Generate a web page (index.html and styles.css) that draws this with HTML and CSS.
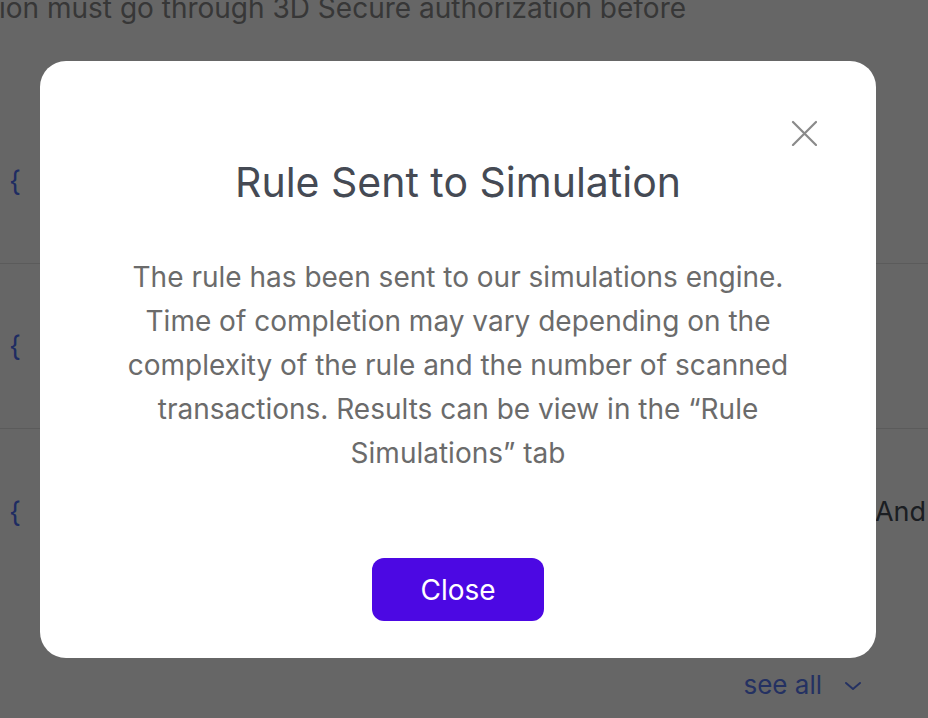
FILE: index.html
```html
<!DOCTYPE html>
<html lang="en">
<head>
<meta charset="utf-8">
<title>Rule Sent to Simulation</title>
<link rel="stylesheet" href="styles.css">
</head>
<body>
<div class="page">
  <p class="intro">ion must go through 3D Secure authorization before</p>
  <div class="rows">
    <div class="row">
      <span class="brace">{</span>
      <div class="field"></div>
    </div>
    <div class="row">
      <span class="brace">{</span>
      <div class="field"></div>
    </div>
    <div class="row row-last">
      <span class="brace">{</span>
      <span class="row-end">And</span>
    </div>
  </div>
  <div class="footer">
    <span class="see-all">see all</span>
    <svg class="chev" width="18" height="12" viewBox="0 0 18 12"><path d="M2 3l7 6 7-6" fill="none" stroke="currentColor" stroke-width="2" stroke-linecap="round" stroke-linejoin="round"/></svg>
  </div>
</div>

<div class="overlay">
  <div class="modal" role="dialog" aria-labelledby="modal-title">
    <button class="close-x" aria-label="Close">
      <svg width="26" height="26" viewBox="0 0 26 26"><path d="M2 2L25 25M25 2L2 25" stroke="currentColor" stroke-width="2.2" stroke-linecap="round"/></svg>
    </button>
    <h2 id="modal-title" class="title">Rule Sent to Simulation</h2>
    <p class="message">The rule has been sent to our simulations engine. Time of completion may vary depending on the complexity of the rule and the number of scanned transactions. Results can be view in the “Rule Simulations” tab</p>
    <button class="btn-close">Close</button>
  </div>
</div>
</body>
</html>
```

FILE: styles.css
```css
* { box-sizing: border-box; }

html, body {
  margin: 0;
  padding: 0;
  width: 928px;
  height: 718px;
  overflow: hidden;
  background: #ffffff;
  font-family: Inter, "Noto Sans", sans-serif;
}

.page {
  display: flex;
  flex-direction: column;
  height: 718px;
}

.intro {
  margin: -10px 0 0 -1px;
  font-size: 28px;
  line-height: 36px;
  color: #8a8a8a;
  white-space: nowrap;
}

.rows {
  margin-top: 73px;
  display: flex;
  flex-direction: column;
}

.row {
  height: 165px;
  display: flex;
  align-items: center;
  gap: 20px;
  padding-left: 9px;
  border-bottom: 1px solid #e3e3e3;
}

.row-last {
  border-bottom: none;
  justify-content: space-between;
}

.brace {
  font-size: 28px;
  color: #4c6ef5;
  line-height: 1;
  margin-top: 0;
}

.field {
  width: 200px;
  height: 32px;
  border: 1px solid #d6d6d6;
  border-radius: 4px;
}

.row-end {
  font-size: 27px;
  color: #444b55;
  margin-right: 2px;
}

.footer {
  margin-top: auto;
  display: flex;
  justify-content: flex-end;
  align-items: center;
  gap: 22px;
  padding: 0 66px 18px 0;
}

.see-all {
  font-size: 26px;
  color: #5b7cf5;
}

.chev {
  color: #5b7cf5;
  margin-top: 2px;
}

.overlay {
  position: fixed;
  inset: 0;
  background: rgba(0, 0, 0, 0.6);
  display: flex;
  align-items: flex-start;
  padding: 61px 0 0 40px;
}

.modal {
  position: relative;
  width: 836px;
  height: 597px;
  background: #ffffff;
  border-radius: 26px;
  display: flex;
  flex-direction: column;
  align-items: center;
  padding-top: 97px;
}

.close-x {
  position: absolute;
  top: 58px;
  right: 58px;
  width: 28px;
  height: 28px;
  padding: 0;
  border: none;
  background: none;
  color: #8a8a8a;
  display: flex;
  align-items: center;
  justify-content: center;
}

.title {
  margin: 0;
  font-size: 41px;
  line-height: 48px;
  font-weight: 400;
  color: #454a54;
}

.message {
  margin: 49px 0 0;
  max-width: 690px;
  text-align: center;
  font-size: 28px;
  line-height: 44px;
  color: #6b6b6b;
}

.btn-close {
  margin-top: 83px;
  width: 172px;
  height: 63px;
  border: none;
  border-radius: 12px;
  background: #4c08e3;
  color: #ffffff;
  font-family: Inter, "Noto Sans", sans-serif;
  font-size: 28px;
  font-weight: 400;
}
```
